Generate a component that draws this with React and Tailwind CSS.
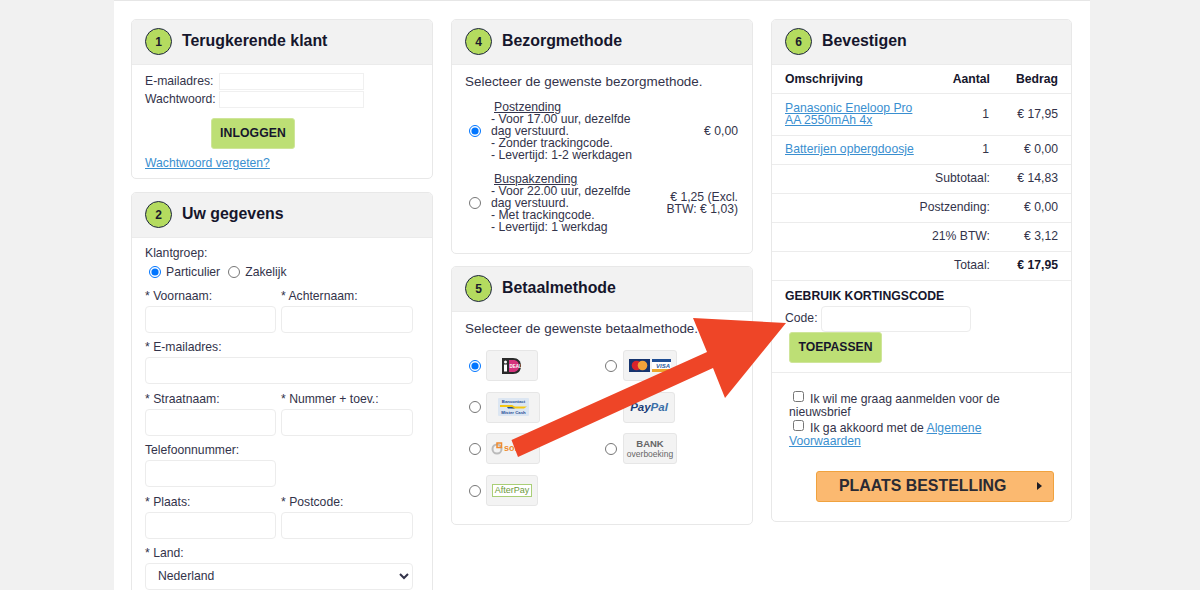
import React from "react";

const Step = ({ n, title }) => (
  <div className="flex h-[45px] items-center gap-[10px] border-b border-[#ebebeb] bg-[#f2f2f2] pb-[1px] pl-[13px]">
    <span className="flex h-[27px] w-[27px] items-center justify-center rounded-full border-[1.5px] border-[#1c2340] bg-[#b4db5f] text-[12px] font-bold text-[#1a1a2e]">{n}</span>
    <h2 className="mb-[2px] text-[15.9px] font-bold text-[#16162c]">{title}</h2>
  </div>
);

const Card = ({ n, title, className = "", children }) => (
  <section className={"shrink-0 overflow-hidden rounded-[5px] border border-[#e8e8e8] bg-white " + className}>
    <Step n={n} title={title} />
    {children}
  </section>
);

const Field = ({ label, wide, half }) => (
  <label className={"flex flex-col " + (wide ? "col-span-2" : "")}>
    <span className="h-[17px] leading-[15px]">{label}</span>
    <input className={"h-[27px] rounded-[4px] border border-[#ececec] bg-white " + (half ? "w-[131px]" : "w-full")} />
  </label>
);

const Radio = ({ name, checked }) => (
  <input type="radio" name={name} defaultChecked={checked} className="m-0 h-[12px] w-[12px] shrink-0" />
);

const Pay = ({ w = "w-[52px]", gap = "gap-[5px]", children, checked }) => (
  <div className={"flex h-[31px] items-center " + gap}>
    <Radio name="pay" checked={checked} />
    <div className={"flex h-[31px] items-center justify-center rounded-[3px] border border-[#e6e6e6] bg-[#f3f3f3] " + w}>{children}</div>
  </div>
);

const Shipping = ({ title, lines, price, checked }) => (
  <div className="flex items-center">
    <Radio name="ship" checked={checked} />
    <div className="ml-[10px] w-[146px] leading-[12px]">
      <div className="pl-[3px] underline">{title}</div>
      {lines.map((l) => <div key={l}>{l}</div>)}
    </div>
    <div className="ml-auto w-[86px] pr-[1px] text-right leading-[12px]">{price}</div>
  </div>
);

const Row = ({ label, value, bold }) => (
  <tr className="h-[29px] border-b border-[#ececec]">
    <td colSpan={2} className="text-right">{label}</td>
    <td className={"pr-[13px] text-right " + (bold ? "font-bold text-[#16162c]" : "")}>{value}</td>
  </tr>
);

const A = ({ children }) => <a href="#" className="text-[#3a8fd0] underline">{children}</a>;

export default function App() {
  return (
    <div className="relative h-[590px] overflow-hidden bg-[#f1f1f1] font-['Liberation_Sans',Arial,sans-serif] text-[12.2px] text-[#33334a]">
      <div className="ml-[114px] flex h-[590px] w-[976px] gap-[18px] border-t border-[#e6e6e6] bg-white pl-[17px] pt-[18px]">
        <div className="flex w-[302px] shrink-0 flex-col gap-[13px]">
          <Card n="1" title="Terugkerende klant" className="h-[160px]">
            <div className="px-[13px] pt-[7px]">
              <div className="flex h-[18px] items-center"><span className="mt-[1px] w-[74px]">E-mailadres:</span><input className="h-[17px] w-[145px] border border-[#f0f0f0]" /></div>
              <div className="flex h-[18px] items-center"><span className="w-[74px]">Wachtwoord:</span><input className="h-[17px] w-[145px] border border-[#f0f0f0]" /></div>
              <button className="ml-[66px] mt-[10px] block h-[31px] w-[84px] rounded-[3px] border border-[#cfe59a] bg-[#bddf75] text-[12.2px] font-bold tracking-[0.1px] text-[#16162c]">INLOGGEN</button>
              <div className="mt-[7px] leading-[15px]"><A>Wachtwoord vergeten?</A></div>
            </div>
          </Card>
          <Card n="2" title="Uw gegevens" className="h-[420px]">
            <div className="px-[13px] pt-[7px]">
              <div className="leading-[16px]">Klantgroep:</div>
              <div className="mt-[3px] flex h-[16px] items-center pl-[4px]">
                <Radio name="group" checked />
                <span className="ml-[5px]">Particulier</span>
                <span className="ml-[8px] flex"><Radio name="group" /></span>
                <span className="ml-[5px]">Zakelijk</span>
              </div>
              <div className="mt-[9px] grid grid-cols-[131px_132px] gap-x-[5px] gap-y-[7.4px]">
                <Field label="* Voornaam:" />
                <Field label="* Achternaam:" />
                <Field label="* E-mailadres:" wide />
                <Field label="* Straatnaam:" />
                <Field label="* Nummer + toev.:" />
                <Field label="Telefoonnummer:" half />
                <div />
                <Field label="* Plaats:" />
                <Field label="* Postcode:" />
                <label className="col-span-2 flex flex-col">
                  <span className="h-[17px] leading-[15px]">* Land:</span>
                  <select className="h-[27px] rounded-[4px] border border-[#ececec] bg-white pl-[8px] pr-[1px] text-[12.2px]"><option>Nederland</option></select>
                </label>
              </div>
            </div>
          </Card>
        </div>

        <div className="flex w-[302px] shrink-0 flex-col gap-[12px]">
          <Card n="4" title="Bezorgmethode" className="h-[235px]">
            <div className="px-[13px] pt-[9px]">
              <div className="text-[13.45px] leading-[16px]">Selecteer de gewenste bezorgmethode.</div>
              <div className="mt-[11px] flex flex-col gap-[12px] pl-[4px]">
                <Shipping checked title="Postzending" price="€ 0,00" lines={["- Voor 17.00 uur, dezelfde", "dag verstuurd.", "- Zonder trackingcode.", "- Levertijd: 1-2 werkdagen"]} />
                <Shipping title="Buspakzending" price={<>€ 1,25 (Excl.<br />BTW: € 1,03)</>} lines={["- Voor 22.00 uur, dezelfde", "dag verstuurd.", "- Met trackingcode.", "- Levertijd: 1 werkdag"]} />
              </div>
            </div>
          </Card>
          <Card n="5" title="Betaalmethode" className="h-[259px]">
            <div className="px-[13px] pt-[9px]">
              <div className="text-[13.45px] leading-[16px]">Selecteer de gewenste betaalmethode.</div>
              <div className="mt-[13px] grid grid-cols-[136px_1fr] gap-y-[10.7px] pl-[4px]">
                <Pay checked>
                  <svg width="20" height="16" viewBox="0 0 20 16">
                    <path d="M0 0h11c5 0 8 3 8 8s-3 8-8 8H0z" fill="#2a2a2a" />
                    <path d="M7 2h4c4 0 6 2.500 6 6s-2 6-6 6H7z" fill="#d5327c" />
                    <rect x="2" y="6.500" width="3" height="7" fill="#fff" />
                    <circle cx="3.500" cy="4" r="1.500" fill="#fff" />
                    <text x="7.500" y="10" fontSize="4.500" fontWeight="700" fill="#fff">DEAL</text>
                  </svg>
                </Pay>
                <Pay w="w-[54px]" gap="gap-[6px]">
                  <svg width="42" height="13" viewBox="0 0 42 13">
                    <rect width="21" height="13" fill="#15336e" />
                    <circle cx="7.500" cy="6.500" r="4.800" fill="#d6232b" />
                    <circle cx="13.500" cy="6.500" r="4.800" fill="#f2a33a" />
                    <rect x="23" width="19" height="13" fill="#fff" />
                    <rect x="23" width="19" height="3" fill="#1f4e94" />
                    <rect x="23" y="10" width="19" height="3" fill="#eda62e" />
                    <text x="27" y="8.800" fontSize="6" fontWeight="700" fontStyle="italic" fill="#2b5aa0">VISA</text>
                  </svg>
                </Pay>
                <Pay w="w-[54px]">
                  <svg width="31" height="18" viewBox="0 0 31 18">
                    <rect width="31" height="18" rx="1" fill="#dce6f2" />
                    <text x="15.500" y="5" fontSize="4.300" fontWeight="700" textAnchor="middle" fill="#1c4c94">Bancontact</text>
                    <path d="M2 7h12l3 1.500h12l-3 2H14l-3-1.500H2z" fill="#f3c613" />
                    <path d="M9 9h5l3 1.500h-7z" fill="#1c4c94" />
                    <text x="15.500" y="16" fontSize="4.300" fontWeight="700" textAnchor="middle" fill="#1c4c94">Mister Cash</text>
                  </svg>
                </Pay>
                <Pay gap="gap-[6px]">
                  <span className="text-[11.5px] font-bold italic text-[#1a3e78]">Pay<span className="text-[#3a6fa8]">Pal</span></span>
                </Pay>
                <Pay w="w-[54px]">
                  <svg width="44" height="16" viewBox="0 0 44 16">
                    <circle cx="6" cy="8" r="4.500" fill="none" stroke="#bbb" strokeWidth="2" />
                    <rect x="6" y="2" width="4.500" height="4.500" fill="none" stroke="#ef8a2e" strokeWidth="1.500" />
                    <text x="13" y="10" fontSize="9" fontWeight="700" fill="#ef8a2e">sofort</text>
                  </svg>
                </Pay>
                <Pay w="w-[54px]" gap="gap-[6px]">
                  <span className="flex flex-col items-center text-[#666]">
                    <span className="text-[9.5px] font-bold leading-[10px]">BANK</span>
                    <span className="text-[8.5px] leading-[10px]">overboeking</span>
                  </span>
                </Pay>
                <Pay w="w-[52px]">
                  <span className="flex h-[13px] w-[40px] items-center justify-center border border-[#a9cf77] bg-white text-[9px] leading-none text-[#6d9a3b]">AfterPay</span>
                </Pay>
              </div>
            </div>
          </Card>
        </div>

        <Card n="6" title="Bevestigen" className="h-[503px] w-[301px]">
          <table className="w-full table-fixed border-collapse">
            <colgroup><col className="w-[168px]" /><col className="w-[50px]" /><col /></colgroup>
            <tbody>
              <tr className="h-[28px] border-b border-[#ececec] font-bold text-[#16162c]">
                <td className="pl-[13px]">Omschrijving</td>
                <td className="text-right">Aantal</td>
                <td className="pr-[13px] text-right">Bedrag</td>
              </tr>
              <tr className="h-[42px] border-b border-[#ececec]">
                <td className="pl-[13px] leading-[12px]"><A>Panasonic Eneloop Pro<br />AA 2550mAh 4x</A></td>
                <td className="pr-[1px] text-right">1</td>
                <td className="pr-[13px] text-right">€ 17,95</td>
              </tr>
              <tr className="h-[29px] border-b border-[#ececec]">
                <td className="whitespace-nowrap pl-[13px]"><A>Batterijen opbergdoosje</A></td>
                <td className="pr-[1px] text-right">1</td>
                <td className="pr-[13px] text-right">€ 0,00</td>
              </tr>
              <Row label="Subtotaal:" value="€ 14,83" />
              <Row label="Postzending:" value="€ 0,00" />
              <Row label="21% BTW:" value="€ 3,12" />
              <Row label="Totaal:" value="€ 17,95" bold />
            </tbody>
          </table>
          <div className="h-[92px] border-b border-[#ececec] px-[13px] pt-[8px]">
            <div className="font-bold leading-[14px] text-[#16162c]">GEBRUIK KORTINGSCODE</div>
            <div className="mt-[3px] flex items-center">
              <span>Code:</span>
              <input className="ml-[3px] h-[26px] w-[150px] rounded-[4px] border border-[#ececec]" />
            </div>
            <button className="ml-[4px] block h-[31px] w-[93px] rounded-[3px] border border-[#cfe59a] bg-[#bddf75] text-[12.2px] font-bold text-[#16162c]">TOEPASSEN</button>
          </div>
          <div className="px-[17px] pt-[18px] leading-[13px]">
            <div><input type="checkbox" className="ml-[4px] mr-[6px] h-[11px] w-[11px] align-[1px]" />Ik wil me graag aanmelden voor de nieuwsbrief</div>
            <div className="mt-[1px]"><input type="checkbox" className="ml-[4px] mr-[6px] h-[11px] w-[11px] align-[1px]" />Ik ga akkoord met de <A>Algemene Voorwaarden</A></div>
          </div>
          <div className="mt-[23px] flex justify-end pr-[17px]">
            <button className="flex h-[31px] w-[238px] items-center rounded-[3px] border border-[#f0a23e] bg-[#fbb970] pl-[22px] pr-[11px] text-[15.9px] font-bold text-[#2a2a33]">
              <span>PLAATS BESTELLING</span>
              <svg className="ml-auto" width="5" height="8" viewBox="0 0 5 8"><path d="M0 0l5 4-5 4z" fill="#1c1c24" /></svg>
            </button>
          </div>
        </Card>
      </div>

      <svg className="pointer-events-none absolute left-0 top-0" width="1200" height="590" viewBox="0 0 1200 590">
        <polygon points="511.500,440 707,352 693,318 786,323 725,398 713,368 518,457" fill="#ee4527" />
      </svg>
    </div>
  );
}
